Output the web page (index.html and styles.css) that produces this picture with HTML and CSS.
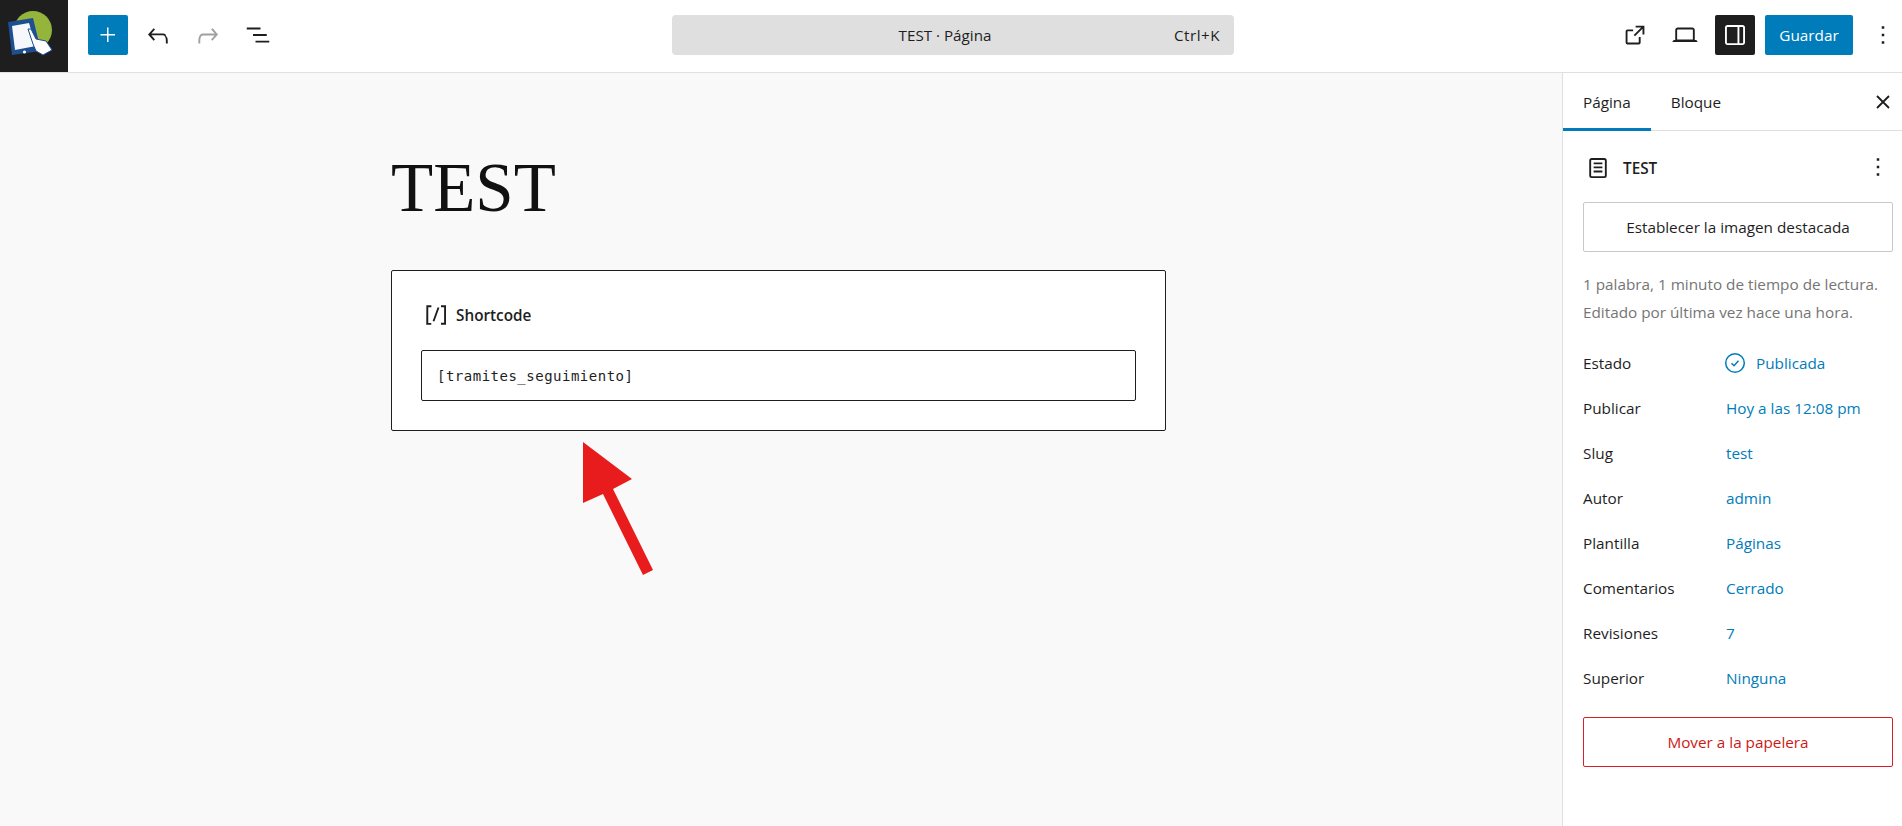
FILE: index.html
```html
<!DOCTYPE html>
<html lang="es">
<head>
<meta charset="utf-8">
<title>TEST</title>
<link rel="stylesheet" href="styles.css">
</head>
<body>
<div class="app">
  <header class="topbar">
    <div class="logo">
      <svg width="68" height="72" viewBox="0 0 68 72">
        <circle cx="33" cy="30" r="19" fill="#94b43b"/>
        <path d="M8 22 L33 18 L41 51 L12 55 Z" fill="#1d4f91"/>
        <path d="M12 26 L29 23 L36 46 L15 50 Z" fill="#f7f8fc"/>
        <circle cx="24.500" cy="52" r="1.600" fill="#fff"/>
        <path d="M28 29 L31 29 L36 39 L46 41 L52 50 L43 55 L36 51 L33 44 Z" fill="#fff" stroke="#1d4f91" stroke-width="1"/>
      </svg>
    </div>
    <div class="tools-left">
      <button class="btn-add" type="button" aria-label="Añadir">
        <svg width="24" height="24" viewBox="0 0 24 24"><path d="M11 12.500V19h1.500v-6.500H19V11h-6.500V4.500H11V11H4.500v1.500z" fill="#fff"/></svg>
      </button>
      <span class="tool">
        <svg width="30" height="30" viewBox="0 0 24 24"><path d="M18.300 11.700c-.6-.6-1.400-.9-2.300-.9H6.700l2.900-3.300-1.100-1-4.500 5L8.500 16.500l1.100-1-2.900-3.300H16c.5 0 .9.200 1.300.5 1 1 1 3.400 1 4.500v1.500h1.500v-1.500c0-1.600 0-3.800-1.500-4.500z" fill="#1e1e1e"/></svg>
      </span>
      <span class="tool">
        <svg width="30" height="30" viewBox="0 0 24 24"><path d="M15.600 6.500l-1.100 1 2.900 3.300H8c-.9 0-1.700.3-2.300.9-1.400 1.500-1.400 4.200-1.400 5.600v1.500h1.500v-1.500c0-1.100 0-3.500 1-4.500.3-.3.700-.5 1.300-.5h9.200l-2.900 3.300 1.100 1 4.500-5-4.400-5.100z" fill="#a0a0a0"/></svg>
      </span>
      <span class="tool">
        <svg width="30" height="30" viewBox="0 0 24 24"><path d="M3 6h11v1.500H3zM8 11.250h11v1.500H8zM10 16.500h11V18H10z" fill="#1e1e1e"/></svg>
      </span>
    </div>
    <div class="center">
      <div class="command">
        <span class="command-title">TEST · Página</span>
        <span class="command-key">Ctrl+K</span>
      </div>
    </div>
    <div class="tools-right">
      <span class="tool">
        <svg width="30" height="30" viewBox="0 0 24 24"><path d="M19.500 4.500h-7V6h4.440l-5.970 5.970 1.060 1.060L18 7.060v4.440h1.500zM6 7.500A1.500 1.500 0 0 0 4.500 9v9A1.500 1.500 0 0 0 6 19.500h9a1.500 1.500 0 0 0 1.500-1.500v-4.500H15V18H6V9h4.500V7.500z" fill="#1e1e1e"/></svg>
      </span>
      <span class="tool">
        <svg width="30" height="30" viewBox="0 0 24 24"><path d="M20.500 16h-.7V8c0-1.100-.9-2-2-2H6.200c-1.100 0-2 .9-2 2v8h-.7c-.8 0-1.500.7-1.500 1.500h20c0-.8-.7-1.500-1.500-1.500zM5.700 8c0-.3.200-.5.500-.5h11.600c.3 0 .5.200.5.500v7.600H5.700V8z" fill="#1e1e1e"/></svg>
      </span>
      <span class="toggle">
        <svg width="30" height="30" viewBox="0 0 24 24"><path d="M18 4H6c-1.100 0-2 .9-2 2v12c0 1.100.9 2 2 2h12c1.100 0 2-.9 2-2V6c0-1.100-.9-2-2-2zM5.500 18V6c0-.3.200-.5.500-.5h8v13H6c-.3 0-.5-.2-.5-.5zm13 0c0 .3-.2.500-.5.500h-2.500v-13H18c.3 0 .5.200.5.500z" fill="#fff"/></svg>
      </span>
      <span class="btn-save">Guardar</span>
      <span class="tool tool-kebab">
        <svg width="30" height="30" viewBox="0 0 24 24"><path d="M13 19h-2v-2h2zm0-6h-2v-2h2zm0-6h-2V5h2z" fill="#1e1e1e"/></svg>
      </span>
    </div>
  </header>

  <div class="body">
    <main class="editor">
      <div class="canvas">
        <h1 class="post-title">TEST</h1>
        <div class="block">
          <div class="block-label">
            <svg width="30" height="30" viewBox="0 0 24 24"><path d="M16 4.200v1.500h2.500v12.500H16v1.500h4V4.200h-4zM4.200 19.800h4v-1.500H5.800V5.800h2.500V4.200h-4zm5.100-3.100 l1.400.5 4-11-1.400-.5z" fill="#1e1e1e"/></svg>
            <span>Shortcode</span>
          </div>
          <div class="block-input">[tramites_seguimiento]</div>
        </div>
      </div>
      <svg class="arrow" width="72" height="136" viewBox="0 0 72 136">
        <path d="M1 0 L50 37 L31 47 L71 128 L61 133 L21 52 L1 61 Z" fill="#e81c1c"/>
      </svg>
    </main>

    <aside class="sidebar">
      <div class="tabs">
        <span class="tab tab-active">Página</span>
        <span class="tab">Bloque</span>
        <svg class="tabs-close" width="24" height="24" viewBox="0 0 24 24"><path d="M6 6 L18 18 M18 6 L6 18" fill="none" stroke="#1e1e1e" stroke-width="1.800"/></svg>
      </div>
      <div class="panel">
        <div class="panel-head">
          <svg width="30" height="30" viewBox="0 0 24 24"><path d="M15.500 7.500h-7V9h7zM8.500 10.750h7v1.500h-7zM8.500 14h7v1.500h-7z" fill="#1e1e1e"/><path d="M17 4H7a2 2 0 0 0-2 2v12a2 2 0 0 0 2 2h10a2 2 0 0 0 2-2V6a2 2 0 0 0-2-2zm.5 14a.5.500 0 0 1-.5.500H7a.5.500 0 0 1-.5-.5V6a.5.500 0 0 1 .5-.5h10a.5.500 0 0 1 .5.500z" fill="#1e1e1e"/></svg>
          <span class="panel-title">TEST</span>
          <svg class="panel-menu" width="30" height="30" viewBox="0 0 24 24"><path d="M13 19h-2v-2h2zm0-6h-2v-2h2zm0-6h-2V5h2z" fill="#1e1e1e"/></svg>
        </div>
        <div class="btn-outline">Establecer la imagen destacada</div>
        <p class="meta">1 palabra, 1 minuto de tiempo de lectura.<br>Editado por última vez hace una hora.</p>
        <div class="rows">
          <div class="row"><span class="row-label">Estado</span><span class="row-value row-status"><svg width="24" height="24" viewBox="0 0 24 24"><circle cx="12" cy="12" r="9.300" fill="none" stroke="#007cba" stroke-width="1.500"/><path d="M8.500 12.300l2.500 2.400 4.500-5" fill="none" stroke="#007cba" stroke-width="1.500"/></svg>Publicada</span></div>
          <div class="row"><span class="row-label">Publicar</span><span class="row-value">Hoy a las 12:08 pm</span></div>
          <div class="row"><span class="row-label">Slug</span><span class="row-value">test</span></div>
          <div class="row"><span class="row-label">Autor</span><span class="row-value">admin</span></div>
          <div class="row"><span class="row-label">Plantilla</span><span class="row-value">Páginas</span></div>
          <div class="row"><span class="row-label">Comentarios</span><span class="row-value">Cerrado</span></div>
          <div class="row"><span class="row-label">Revisiones</span><span class="row-value">7</span></div>
          <div class="row"><span class="row-label">Superior</span><span class="row-value">Ninguna</span></div>
        </div>
        <div class="btn-trash">Mover a la papelera</div>
      </div>
    </aside>
  </div>
</div>
</body>
</html>
```
FILE: styles.css
```css
* { box-sizing: border-box; }
html, body { margin: 0; height: 100%; overflow: hidden; }
body {
  font-family: "Open Sans", "Noto Sans", sans-serif;
  font-size: 15.3px;
  color: #1e1e1e;
  background: #fff;
}
svg { display: block; flex: none; }

.app { display: flex; flex-direction: column; height: 826px; }

.topbar {
  display: flex;
  align-items: center;
  height: 73px;
  flex: none;
  border-bottom: 1px solid #e0e0e0;
  background: #fff;
}
.logo { width: 68px; height: 72px; background: #1e1e1e; flex: none; }
.tools-left { display: flex; align-items: center; width: 604px; padding-left: 20px; flex: none; margin-bottom: 2px; }
.btn-add {
  width: 40px; height: 40px; padding: 0; border: 0; border-radius: 2px;
  background: #007cba; display: flex; align-items: center; justify-content: center;
  margin-right: 10px;
}
.tool { width: 40px; height: 40px; display: flex; align-items: center; justify-content: center; margin-right: 10px; flex: none; }

.center { width: 562px; flex: none; margin-bottom: 2px; }
.command {
  position: relative;
  height: 40px;
  background: #dfdfdf;
  border-radius: 4px;
  display: flex;
  align-items: center;
  justify-content: center;
  padding-right: 16px;
  font-size: 15.2px;
}
.command-key { position: absolute; right: 14px; letter-spacing: 0.5px; }

.tools-right { display: flex; align-items: center; flex: 1; justify-content: flex-end; margin-bottom: 2px; }
.toggle {
  width: 40px; height: 40px; background: #1e1e1e; border-radius: 2px;
  display: flex; align-items: center; justify-content: center; margin-right: 10px;
}
.btn-save {
  width: 88px; height: 40px; background: #007cba; color: #fff; border-radius: 2px;
  display: flex; align-items: center; justify-content: center;
  margin-right: 10px;
}
.tools-right .tool-kebab { margin-right: -1px; width: 40px; }

.body { display: flex; flex: 1; min-height: 0; }

.editor { position: relative; flex: 1; background: #f9f9f9; }
.canvas { width: 775px; margin-left: 391px; }
.post-title {
  margin: 0;
  padding-top: 75px;
  height: 197px;
  font-family: "Liberation Serif", serif;
  font-weight: 400;
  font-size: 69px;
  line-height: 80px;
  color: #111;
}
.block {
  height: 161px;
  background: #fff;
  border: 1px solid #1e1e1e;
  border-radius: 2px;
  padding: 32px 29px 0;
}
.block-label { display: flex; align-items: center; gap: 5px; height: 24px; font-weight: 600; margin-bottom: 23px; }
.block-input {
  height: 51px;
  border: 1px solid #1e1e1e;
  border-radius: 2px;
  padding-left: 15px;
  display: flex;
  align-items: center;
  background: #fff;
  font-family: "DejaVu Sans Mono", monospace;
  font-size: 14px;
  letter-spacing: 0.5px;
}
.arrow { position: absolute; left: 582px; top: 369px; }

.sidebar { width: 340px; flex: none; background: #fff; border-left: 1px solid #e0e0e0; }
.tabs {
  position: relative;
  display: flex;
  height: 58px;
  border-bottom: 1px solid #e0e0e0;
}
.tab { display: flex; align-items: center; height: 58px; padding: 0 20px; }
.tab-active { box-shadow: inset 0 -3px 0 #007cba; }
.tabs-close { position: absolute; right: 7px; top: 17px; }

.panel { padding: 0 9px 0 20px; }
.panel-head { position: relative; display: flex; align-items: center; height: 71px; gap: 10px; padding-top: 2px; }
.panel-title { font-weight: 600; }
.panel-menu { position: absolute; right: 0; top: 21px; }

.btn-outline, .btn-trash {
  height: 50px; border-radius: 2px; display: flex; align-items: center; justify-content: center;
}
.btn-outline { border: 1px solid #c9c9c9; }
.meta { margin: 18px 0 0; line-height: 28px; color: #757575; white-space: nowrap; }
.rows { margin-top: 14px; }
.row { display: flex; align-items: center; height: 45px; }
.row-label { width: 143px; flex: none; }
.row-value { color: #007cba; }
.row-status { display: flex; align-items: center; gap: 9px; margin-left: -3px; }
.btn-trash { margin-top: 17px; border: 1px solid #d81f2a; color: #cc1818; }
```
